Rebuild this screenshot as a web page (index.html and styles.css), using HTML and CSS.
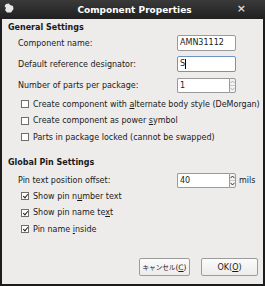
FILE: index.html
```html
<!DOCTYPE html>
<html>
<head>
<meta charset="utf-8">
<link rel="stylesheet" href="styles.css">
</head>
<body>
<div class="window">
  <div class="titlebar">
    <svg class="appicon" width="10" height="10" viewBox="0 0 10 10"><path d="M2 1 L5 0.5 L6 2 L9 3 L9.5 6 L7 9.5 L3 9.5 L1 7 L2 5 L0.5 3 Z" fill="#e8e8e8"/></svg>
    <div class="title">Component Properties</div>
    <div class="close">×</div>
  </div>
  <div class="content">
    <div class="heading">General Settings</div>
    <div class="grid">
      <div class="label">Component name:</div>
      <div class="entry">AMN31112</div>
      <div class="label">Default reference designator:</div>
      <div class="entry focus">S<span class="caret"></span></div>
      <div class="label">Number of parts per package:</div>
      <div class="spin"><div class="spintext">1</div><div class="spinbtns dis"><span class="half up"><svg width="5" height="4" viewBox="0 0 5 4"><path d="M0.5 3.2 L2.5 1 L4.5 3.2" fill="none" stroke="currentColor" stroke-width="1"/></svg></span><span class="half"><svg width="5" height="4" viewBox="0 0 5 4"><path d="M0.5 0.8 L2.5 3 L4.5 0.8" fill="none" stroke="currentColor" stroke-width="1"/></svg></span></div></div>
    </div>
    <div class="checks first">
      <div class="check"><span class="box"></span><span>Create component with <u>a</u>lternate body style (DeMorgan)</span></div>
      <div class="check"><span class="box"></span><span>Create component as power <u>s</u>ymbol</span></div>
      <div class="check"><span class="box"></span><span>Parts in package locked (cannot be swapped)</span></div>
    </div>
    <div class="heading second">Global Pin Settings</div>
    <div class="pinrow">
      <div class="label">Pin text position offset:</div>
      <div class="spin"><div class="spintext">40</div><div class="spinbtns"><span class="half up"><svg width="5" height="4" viewBox="0 0 5 4"><path d="M0.5 3.2 L2.5 1 L4.5 3.2" fill="none" stroke="currentColor" stroke-width="1"/></svg></span><span class="half"><svg width="5" height="4" viewBox="0 0 5 4"><path d="M0.5 0.8 L2.5 3 L4.5 0.8" fill="none" stroke="currentColor" stroke-width="1"/></svg></span></div></div>
      <div class="unit">mils</div>
    </div>
    <div class="checks">
      <div class="check"><span class="box checked"></span><span>Show pin n<u>u</u>mber text</span></div>
      <div class="check"><span class="box checked"></span><span>Show pin name te<u>x</u>t</span></div>
      <div class="check"><span class="box checked"></span><span>Pin name <u>i</u>nside</span></div>
    </div>
    <div class="buttons">
      <div class="btn cancel"><span class="jp">キャンセル</span>(<u>C</u>)</div>
      <div class="btn ok">OK(<u>O</u>)</div>
    </div>
  </div>
</div>
</body>
</html>
```
FILE: styles.css
```css
html, body {
  margin: 0;
  padding: 0;
  width: 265px;
  height: 286px;
  overflow: hidden;
  background: #1c1c1c;
}
.window {
  width: 265px;
  height: 286px;
  box-sizing: border-box;
  display: flex;
  flex-direction: column;
  font-family: "DejaVu Sans", sans-serif;
  font-size: 8px;
  color: #1a1a1a;
}
.titlebar {
  height: 19px;
  flex: none;
  display: flex;
  align-items: center;
  position: relative;
  background: linear-gradient(#3a3a3a, #202020);
}
.appicon {
  position: absolute;
  left: 4px;
  top: 3px;
}
.title {
  flex: 1;
  text-align: center;
  color: #ffffff;
  font-weight: bold;
  font-size: 9px;
  padding-left: 4px;
}
.close {
  position: absolute;
  right: 19px;
  top: 3px;
  color: #d8d8d8;
  font-size: 11px;
  font-weight: bold;
  line-height: 12px;
}
.content {
  flex: 1;
  margin: 0 2px 2px 2px;
  background: #edeceb;
  display: flex;
  flex-direction: column;
  padding: 4px 0 0 6px;
}
.heading {
  font-weight: bold;
  height: 10px;
  line-height: 10px;
  font-size: 8px;
}
.heading.second {
  margin-top: 12px;
}
.grid {
  margin-top: 2px;
  display: grid;
  grid-template-columns: 169px 59px;
  grid-auto-rows: 16px;
  row-gap: 5px;
  align-items: center;
}
.label {
  padding-left: 10px;
}
.entry {
  height: 16px;
  box-sizing: border-box;
  border: 1px solid #9a9a9a;
  border-radius: 2px;
  background: #ffffff;
  padding-left: 2px;
  line-height: 14px;
  display: flex;
  align-items: center;
}
.entry.focus {
  border-color: #6f93c5;
}
.caret {
  display: inline-block;
  width: 1px;
  height: 10px;
  background: #000;
}
.spin {
  height: 15px;
  display: flex;
  box-sizing: border-box;
}
.spintext {
  flex: 1;
  border: 1px solid #9a9a9a;
  border-right: none;
  border-radius: 2px 0 0 2px;
  background: #fff;
  padding-left: 2px;
  line-height: 13px;
}
.spinbtns {
  width: 7px;
  flex: none;
  border: 1px solid #9a9a9a;
  border-radius: 0 2px 2px 0;
  background: #f3f3f3;
  display: flex;
  flex-direction: column;
  box-sizing: border-box;
  color: #333;
}
.spinbtns.dis {
  color: #b0b0b0;
}
.half {
  flex: 1;
  display: flex;
  align-items: center;
  justify-content: center;
}
.half.up {
  border-bottom: 1px solid #c8c8c8;
}
.checks {
  display: flex;
  flex-direction: column;
}
.checks.first {
  margin-top: 3px;
}
.check {
  height: 16.6px;
  display: flex;
  align-items: center;
  padding-left: 13px;
}
.box {
  width: 8px;
  height: 8px;
  box-sizing: border-box;
  border: 1px solid #6e6e6e;
  background: #fff;
  margin-right: 4px;
  position: relative;
  flex: none;
}
.box.checked::after {
  content: "";
  position: absolute;
  left: 2px;
  top: 0px;
  width: 2px;
  height: 4px;
  border: solid #222;
  border-width: 0 1px 1px 0;
  transform: rotate(40deg);
}
.pinrow {
  margin-top: 5px;
  display: grid;
  grid-template-columns: 169px 59px auto;
  align-items: center;
}
.unit {
  padding-left: 3px;
}
.buttons {
  margin-top: auto;
  margin-bottom: 8px;
  display: flex;
  justify-content: flex-end;
  gap: 11px;
  padding-right: 5px;
}
.btn {
  height: 18px;
  box-sizing: border-box;
  border: 1px solid #9c9c9c;
  border-radius: 2px;
  background: linear-gradient(#fbfbfb, #ececec);
  display: flex;
  align-items: center;
  justify-content: center;
  white-space: nowrap;
  font-size: 8px;
}
.jp {
  font-family: "Noto Sans CJK JP", sans-serif;
  font-size: 6.6px;
}
.cancel { width: 51px; font-size: 7.5px; }
.ok { width: 57px; }
u { text-decoration-thickness: 1px; text-underline-offset: 1px; }
```
